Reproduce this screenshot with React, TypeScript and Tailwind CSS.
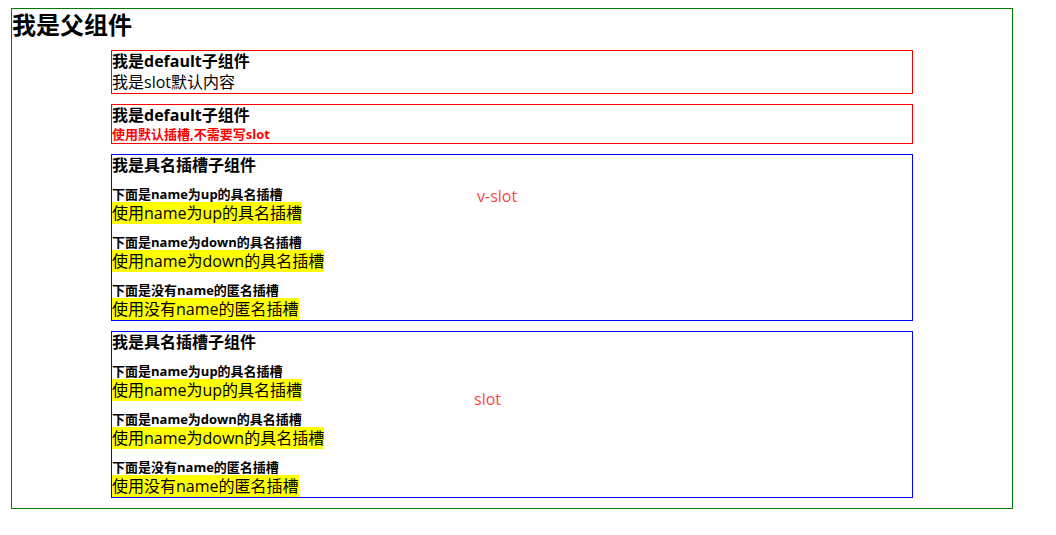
const font = {
  fontFamily: '"Open Sans", "Noto Sans CJK SC", sans-serif',
};

function DefaultChild({ children }: { children: React.ReactNode }) {
  return (
    <div className="mx-auto mb-[10px] w-[802px] border border-[#ff0000]">
      <div className="text-[16px] font-bold leading-[21px]">我是default子组件</div>
      {children}
    </div>
  );
}

function Section({ label, text }: { label: string; text: string }) {
  return (
    <div className="mt-[10px]">
      <div className="text-[13px] font-bold leading-[17px]">{label}</div>
      <div className="leading-[21px]">
        <span className="bg-[#ffff00] text-[16px]">{text}</span>
      </div>
    </div>
  );
}

function NamedChild({ tag, tagClass }: { tag: string; tagClass: string }) {
  return (
    <div className="relative mx-auto mb-[10px] w-[802px] border border-[#0000ff]">
      <div className="text-[16px] font-bold leading-[21px]">我是具名插槽子组件</div>
      <Section label="下面是name为up的具名插槽" text="使用name为up的具名插槽" />
      <Section label="下面是name为down的具名插槽" text="使用name为down的具名插槽" />
      <Section label="下面是没有name的匿名插槽" text="使用没有name的匿名插槽" />
      <span className={`absolute text-[16px] leading-[21px] text-[#ff4444] ${tagClass}`}>{tag}</span>
    </div>
  );
}

export default function App() {
  return (
    <div className="min-h-[535px] bg-white pl-[11px] pt-[8px] text-black" style={font}>
      <div className="w-[1002px] border border-[#008000]">
        <h2 className="mb-[9px] text-[24px] font-bold leading-[32px]">我是父组件</h2>
        <DefaultChild>
          <div className="text-[16px] leading-[21px]">我是slot默认内容</div>
        </DefaultChild>
        <DefaultChild>
          <div className="text-[13px] font-bold leading-[17px] text-[#ff0000]">使用默认插槽,不需要写slot</div>
        </DefaultChild>
        <NamedChild tag="v-slot" tagClass="left-[365px] top-[31px]" />
        <NamedChild tag="slot" tagClass="left-[362px] top-[57px]" />
      </div>
    </div>
  );
}
